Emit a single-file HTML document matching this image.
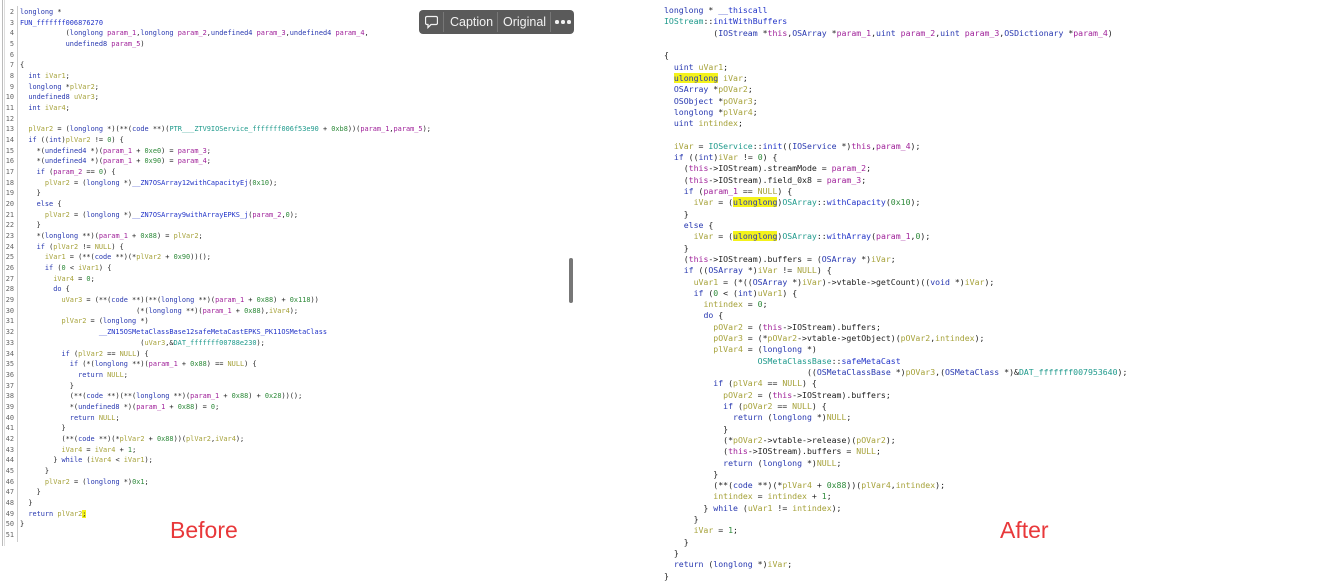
<!DOCTYPE html>
<html><head><meta charset="utf-8"><style>
html,body{margin:0;padding:0;background:#fff;}
body{width:1329px;height:586px;position:relative;overflow:hidden;}
pre{margin:0;position:absolute;font-family:"DejaVu Sans Mono","Liberation Mono",monospace;white-space:pre;color:#222;}
#ln{left:0;top:7px;width:14px;text-align:right;font-size:6.9px;line-height:10.67px;color:#666;}
#lc{left:20px;top:7px;font-size:6.9px;line-height:10.67px;}
#rc{left:664px;top:5px;font-size:8.2px;line-height:11.32px;}
.t{color:#2838b0}.p{color:#a0229a}.v{color:#a6a23a}.n{color:#2e8a3a}.f{color:#2234c8}.g{color:#1f9a8c}.k{color:#2838b0}
.hl{background:#f4f21a;}
.bar1{position:absolute;left:2px;top:0;width:1px;height:546px;background:#bbb;}
.bar2{position:absolute;left:4px;top:0;width:1px;height:546px;background:#ddd;}
.bar3{position:absolute;left:17px;top:6px;width:1px;height:536px;background:#ccc;}
.sb{position:absolute;left:569px;top:258px;width:4px;height:45px;border-radius:2px;background:#777;}
.tb{position:absolute;left:419px;top:10px;width:155px;height:24px;background:#5a5a5a;border-radius:4px;color:#f2f2f2;font-family:"Liberation Sans",sans-serif;font-size:12.5px;}
.tb span{position:absolute;top:5px;}
.sep{position:absolute;top:2px;width:1px;height:20px;background:#777;}
.lbl{position:absolute;font-family:"Liberation Sans",sans-serif;font-size:23px;color:#e8383a;}
.dot{position:absolute;top:10px;width:3.5px;height:3.5px;border-radius:50%;background:#f2f2f2;}
</style></head><body>
<div class="bar1"></div><div class="bar2"></div><div class="bar3"></div>
<pre id="ln">2
3
4
5
6
7
8
9
10
11
12
13
14
15
16
17
18
19
20
21
22
23
24
25
26
27
28
29
30
31
32
33
34
35
36
37
38
39
40
41
42
43
44
45
46
47
48
49
50
51</pre>
<pre id="lc"><span class="t">longlong</span> *
<span class="f">FUN_fffffff006876270</span>
           (<span class="t">longlong</span> <span class="p">param_1</span>,<span class="t">longlong</span> <span class="p">param_2</span>,<span class="t">undefined4</span> <span class="p">param_3</span>,<span class="t">undefined4</span> <span class="p">param_4</span>,
           <span class="t">undefined8</span> <span class="p">param_5</span>)

{
  <span class="t">int</span> <span class="v">iVar1</span>;
  <span class="t">longlong</span> *<span class="v">plVar2</span>;
  <span class="t">undefined8</span> <span class="v">uVar3</span>;
  <span class="t">int</span> <span class="v">iVar4</span>;

  <span class="v">plVar2</span> = (<span class="t">longlong</span> *)(**(<span class="t">code</span> **)(<span class="g">PTR___ZTV9IOService_fffffff006f53e90</span> + <span class="n">0xb8</span>))(<span class="p">param_1</span>,<span class="p">param_5</span>);
  <span class="k">if</span> ((<span class="t">int</span>)<span class="v">plVar2</span> != <span class="n">0</span>) {
    *(<span class="t">undefined4</span> *)(<span class="p">param_1</span> + <span class="n">0xe0</span>) = <span class="p">param_3</span>;
    *(<span class="t">undefined4</span> *)(<span class="p">param_1</span> + <span class="n">0x90</span>) = <span class="p">param_4</span>;
    <span class="k">if</span> (<span class="p">param_2</span> == <span class="n">0</span>) {
      <span class="v">plVar2</span> = (<span class="t">longlong</span> *)<span class="f">__ZN7OSArray12withCapacityEj</span>(<span class="n">0x10</span>);
    }
    <span class="k">else</span> {
      <span class="v">plVar2</span> = (<span class="t">longlong</span> *)<span class="f">__ZN7OSArray9withArrayEPKS_j</span>(<span class="p">param_2</span>,<span class="n">0</span>);
    }
    *(<span class="t">longlong</span> **)(<span class="p">param_1</span> + <span class="n">0x88</span>) = <span class="v">plVar2</span>;
    <span class="k">if</span> (<span class="v">plVar2</span> != <span class="v">NULL</span>) {
      <span class="v">iVar1</span> = (**(<span class="t">code</span> **)(*<span class="v">plVar2</span> + <span class="n">0x90</span>))();
      <span class="k">if</span> (<span class="n">0</span> &lt; <span class="v">iVar1</span>) {
        <span class="v">iVar4</span> = <span class="n">0</span>;
        <span class="k">do</span> {
          <span class="v">uVar3</span> = (**(<span class="t">code</span> **)(**(<span class="t">longlong</span> **)(<span class="p">param_1</span> + <span class="n">0x88</span>) + <span class="n">0x118</span>))
                            (*(<span class="t">longlong</span> **)(<span class="p">param_1</span> + <span class="n">0x88</span>),<span class="v">iVar4</span>);
          <span class="v">plVar2</span> = (<span class="t">longlong</span> *)
                   <span class="f">__ZN15OSMetaClassBase12safeMetaCastEPKS_PK11OSMetaClass</span>
                             (<span class="v">uVar3</span>,&amp;<span class="g">DAT_fffffff00788e230</span>);
          <span class="k">if</span> (<span class="v">plVar2</span> == <span class="v">NULL</span>) {
            <span class="k">if</span> (*(<span class="t">longlong</span> **)(<span class="p">param_1</span> + <span class="n">0x88</span>) == <span class="v">NULL</span>) {
              <span class="k">return</span> <span class="v">NULL</span>;
            }
            (**(<span class="t">code</span> **)(**(<span class="t">longlong</span> **)(<span class="p">param_1</span> + <span class="n">0x88</span>) + <span class="n">0x28</span>))();
            *(<span class="t">undefined8</span> *)(<span class="p">param_1</span> + <span class="n">0x88</span>) = <span class="n">0</span>;
            <span class="k">return</span> <span class="v">NULL</span>;
          }
          (**(<span class="t">code</span> **)(*<span class="v">plVar2</span> + <span class="n">0x88</span>))(<span class="v">plVar2</span>,<span class="v">iVar4</span>);
          <span class="v">iVar4</span> = <span class="v">iVar4</span> + <span class="n">1</span>;
        } <span class="k">while</span> (<span class="v">iVar4</span> &lt; <span class="v">iVar1</span>);
      }
      <span class="v">plVar2</span> = (<span class="t">longlong</span> *)<span class="n">0x1</span>;
    }
  }
  <span class="k">return</span> <span class="v">plVar2</span><span class="hl">;</span>
}
</pre>
<div class="sb"></div>
<div class="tb">
<svg style="position:absolute;left:6px;top:5px" width="13" height="14" viewBox="0 0 13 14"><path d="M2 1.5h9a1.5 1.5 0 0 1 1.5 1.5v5a1.5 1.5 0 0 1-1.5 1.5H6l-3 3v-3H2A1.5 1.5 0 0 1 .5 8V3A1.5 1.5 0 0 1 2 1.5z" fill="none" stroke="#f2f2f2" stroke-width="1.3"/></svg>
<div class="sep" style="left:24px"></div>
<span style="left:31px">Caption</span>
<div class="sep" style="left:78px"></div>
<span style="left:84px">Original</span>
<div class="sep" style="left:131px"></div>
<div class="dot" style="left:136px"></div>
<div class="dot" style="left:142px"></div>
<div class="dot" style="left:148px"></div>
</div>
<div class="lbl" style="left:170px;top:517px">Before</div>
<pre id="rc"><span class="t">longlong</span> * <span class="f">__thiscall</span>
<span class="g">IOStream</span>::<span class="f">initWithBuffers</span>
          (<span class="t">IOStream</span> *<span class="p">this</span>,<span class="t">OSArray</span> *<span class="p">param_1</span>,<span class="t">uint</span> <span class="p">param_2</span>,<span class="t">uint</span> <span class="p">param_3</span>,<span class="t">OSDictionary</span> *<span class="p">param_4</span>)

{
  <span class="t">uint</span> <span class="v">uVar1</span>;
  <span class="t hl">ulonglong</span> <span class="v">iVar</span>;
  <span class="t">OSArray</span> *<span class="v">pOVar2</span>;
  <span class="t">OSObject</span> *<span class="v">pOVar3</span>;
  <span class="t">longlong</span> *<span class="v">plVar4</span>;
  <span class="t">uint</span> <span class="v">intindex</span>;

  <span class="v">iVar</span> = <span class="g">IOService</span>::<span class="f">init</span>((<span class="t">IOService</span> *)<span class="p">this</span>,<span class="p">param_4</span>);
  <span class="k">if</span> ((<span class="t">int</span>)<span class="v">iVar</span> != <span class="n">0</span>) {
    (<span class="p">this</span>-&gt;IOStream).streamMode = <span class="p">param_2</span>;
    (<span class="p">this</span>-&gt;IOStream).field_0x8 = <span class="p">param_3</span>;
    <span class="k">if</span> (<span class="p">param_1</span> == <span class="v">NULL</span>) {
      <span class="v">iVar</span> = (<span class="t hl">ulonglong</span>)<span class="g">OSArray</span>::<span class="f">withCapacity</span>(<span class="n">0x10</span>);
    }
    <span class="k">else</span> {
      <span class="v">iVar</span> = (<span class="t hl">ulonglong</span>)<span class="g">OSArray</span>::<span class="f">withArray</span>(<span class="p">param_1</span>,<span class="n">0</span>);
    }
    (<span class="p">this</span>-&gt;IOStream).buffers = (<span class="t">OSArray</span> *)<span class="v">iVar</span>;
    <span class="k">if</span> ((<span class="t">OSArray</span> *)<span class="v">iVar</span> != <span class="v">NULL</span>) {
      <span class="v">uVar1</span> = (*((<span class="t">OSArray</span> *)<span class="v">iVar</span>)-&gt;vtable-&gt;getCount)((<span class="t">void</span> *)<span class="v">iVar</span>);
      <span class="k">if</span> (<span class="n">0</span> &lt; (<span class="t">int</span>)<span class="v">uVar1</span>) {
        <span class="v">intindex</span> = <span class="n">0</span>;
        <span class="k">do</span> {
          <span class="v">pOVar2</span> = (<span class="p">this</span>-&gt;IOStream).buffers;
          <span class="v">pOVar3</span> = (*<span class="v">pOVar2</span>-&gt;vtable-&gt;getObject)(<span class="v">pOVar2</span>,<span class="v">intindex</span>);
          <span class="v">plVar4</span> = (<span class="t">longlong</span> *)
                   <span class="g">OSMetaClassBase</span>::<span class="f">safeMetaCast</span>
                             ((<span class="t">OSMetaClassBase</span> *)<span class="v">pOVar3</span>,(<span class="t">OSMetaClass</span> *)&amp;<span class="g">DAT_fffffff007953640</span>);
          <span class="k">if</span> (<span class="v">plVar4</span> == <span class="v">NULL</span>) {
            <span class="v">pOVar2</span> = (<span class="p">this</span>-&gt;IOStream).buffers;
            <span class="k">if</span> (<span class="v">pOVar2</span> == <span class="v">NULL</span>) {
              <span class="k">return</span> (<span class="t">longlong</span> *)<span class="v">NULL</span>;
            }
            (*<span class="v">pOVar2</span>-&gt;vtable-&gt;release)(<span class="v">pOVar2</span>);
            (<span class="p">this</span>-&gt;IOStream).buffers = <span class="v">NULL</span>;
            <span class="k">return</span> (<span class="t">longlong</span> *)<span class="v">NULL</span>;
          }
          (**(<span class="t">code</span> **)(*<span class="v">plVar4</span> + <span class="n">0x88</span>))(<span class="v">plVar4</span>,<span class="v">intindex</span>);
          <span class="v">intindex</span> = <span class="v">intindex</span> + <span class="n">1</span>;
        } <span class="k">while</span> (<span class="v">uVar1</span> != <span class="v">intindex</span>);
      }
      <span class="v">iVar</span> = <span class="n">1</span>;
    }
  }
  <span class="k">return</span> (<span class="t">longlong</span> *)<span class="v">iVar</span>;
}</pre>
<div class="lbl" style="left:1000px;top:517px">After</div>
</body></html>
